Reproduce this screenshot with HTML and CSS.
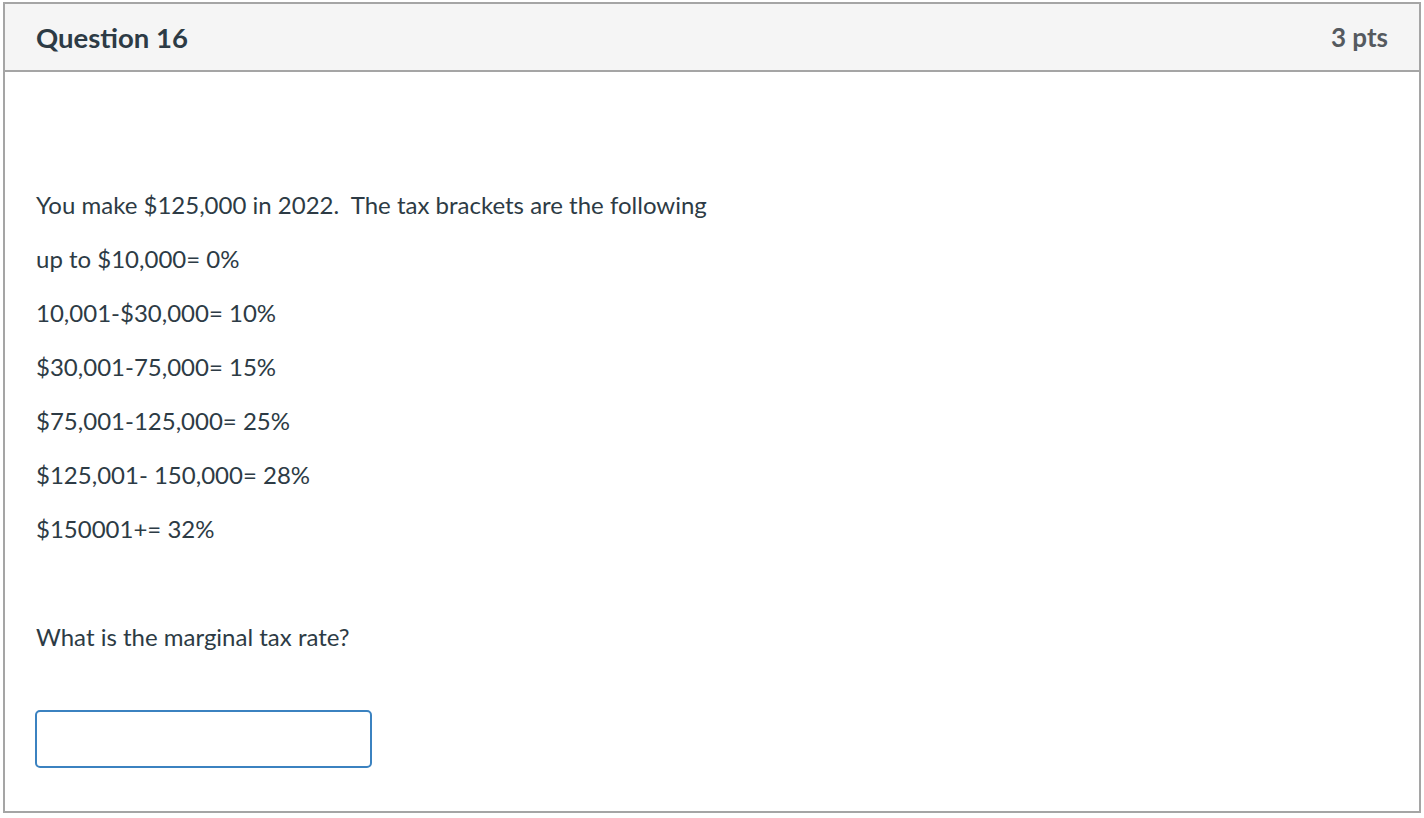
FILE: index.html
```html
<!DOCTYPE html>
<html>
<head>
<meta charset="utf-8">
<link rel="stylesheet" href="styles.css">
</head>
<body>
<div class="question">
  <div class="question-header">
    <span class="question-title">Question 16</span>
    <span class="question-points">3 pts</span>
  </div>
  <div class="question-body">
    <div class="question-text">
      <p>You make $125,000 in 2022.&nbsp; The tax brackets are the following</p>
      <p>up to $10,000= 0%</p>
      <p>10,001-$30,000= 10%</p>
      <p>$30,001-75,000= 15%</p>
      <p>$75,001-125,000= 25%</p>
      <p>$125,001- 150,000= 28%</p>
      <p>$150001+= 32%</p>
      <p>&nbsp;</p>
      <p>What is the marginal tax rate?</p>
    </div>
    <input class="answer-input" type="text" aria-label="Answer">
  </div>
</div>
</body>
</html>
```

FILE: styles.css
```css
html, body {
  margin: 0;
  padding: 0;
  background: #ffffff;
}

body {
  padding: 2px 0 0 3px;
  font-family: Lato, "Open Sans", "Liberation Sans", sans-serif;
  color: #2d3b45;
}

.question {
  width: 1418px;
  height: 811px;
  box-sizing: border-box;
  border: 2px solid #a5a5a5;
  display: flex;
  flex-direction: column;
}

.question-header {
  height: 68px;
  box-sizing: border-box;
  background: #f5f5f5;
  border-bottom: 2px solid #a5a5a5;
  display: flex;
  align-items: center;
  justify-content: space-between;
  padding: 0 31px;
}

.question-title {
  font-size: 27.5px;
  font-weight: 700;
  color: #2d3b45;
}

.question-points {
  font-size: 26px;
  font-weight: 700;
  color: #555a5f;
}

.question-body {
  padding: 118px 31px 0;
}

.question-text p {
  margin: 0 0 24px;
  font-size: 24px;
  line-height: 30px;
}

.question-text p:last-child {
  margin-bottom: 0;
}

.answer-input {
  display: block;
  margin: 58px 0 0 -1px;
  width: 337px;
  height: 58px;
  box-sizing: border-box;
  border: 2px solid #3b82c0;
  border-radius: 5px;
  background: #ffffff;
  outline: none;
  padding: 0 10px;
  font-family: inherit;
  font-size: 20px;
}
```
